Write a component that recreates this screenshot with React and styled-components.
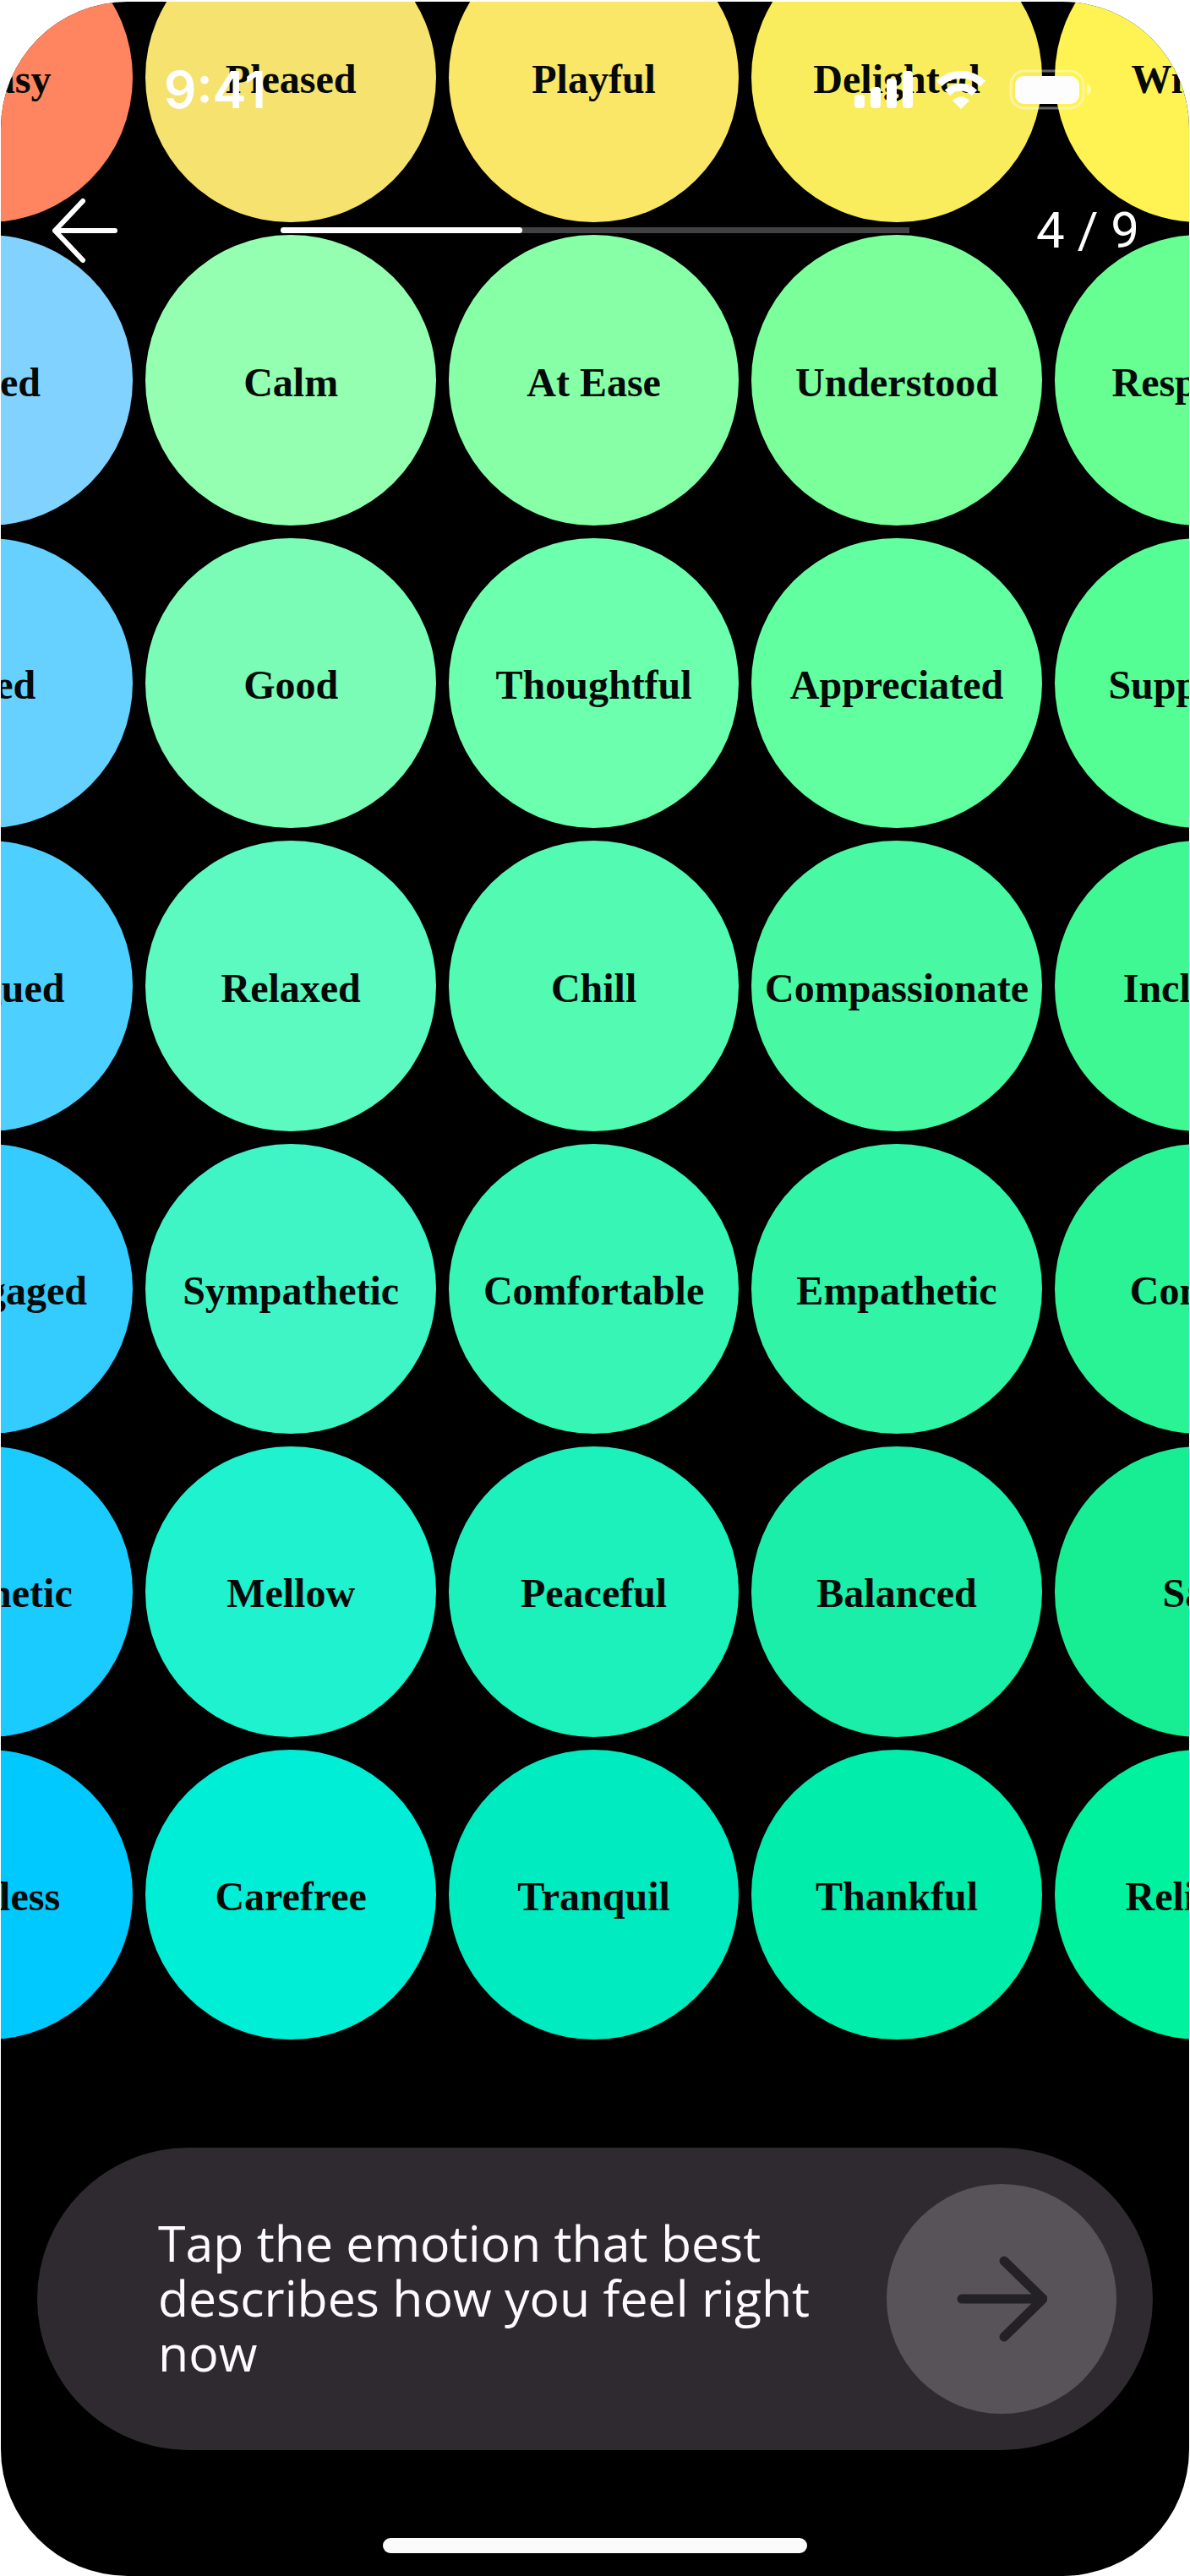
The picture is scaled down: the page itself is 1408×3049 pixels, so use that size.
import React, { useState } from "react";
import styled, { createGlobalStyle } from "styled-components";

const GlobalStyle = createGlobalStyle`
  * { box-sizing: border-box; }
  body { margin: 0; background: #ffffff; }
`;

const serif = `"Liberation Serif", "Times New Roman", serif`;
const sans = `"Open Sans", "Noto Sans", sans-serif`;
const system = `Inter, Roboto, sans-serif`;

const Page = styled.div`
  padding: 2px 1px 0;
`;

const Screen = styled.div`
  position: relative;
  overflow: hidden;
  padding-bottom: 27px;
  border-radius: 150px;
  background: #000000;
`;

const Overlay = styled.header`
  position: absolute;
  z-index: 1;
  inset: 0 0 auto;
  color: #ffffff;
  font-family: ${system};
`;

const StatusBar = styled.div`
  display: flex;
  align-items: center;
  justify-content: space-between;
  height: 208px;
  padding: 0 115px 0 193px;
`;

const Clock = styled.time`
  font-size: 60px;
  font-weight: 600;
  line-height: 70px;
`;

const StatusIcons = styled.div`
  display: flex;
  align-items: center;
  gap: 27px;

  svg { display: block; }
`;

const NavBar = styled.nav`
  display: grid;
  grid-template-columns: 272px 1fr 272px;
  align-items: center;
  height: 125px;
  padding: 0 59px;
`;

const BackButton = styled.button`
  justify-self: start;
  padding: 0;
  border: 0;
  background: none;
  color: inherit;
  cursor: pointer;

  svg { display: block; }
`;

const Track = styled.div`
  height: 7px;
  border-radius: 4px 0 0 4px;
  background: #424144;
`;

const Fill = styled.div`
  width: ${({ $value }) => $value}%;
  height: 100%;
  border-radius: 4px;
  background: #ffffff;
`;

const Step = styled.span`
  justify-self: end;
  font-family: Roboto, Inter, sans-serif;
  font-size: 60px;
  line-height: 70px;
`;

const EmotionGrid = styled.main`
  display: grid;
  grid-template-columns: repeat(5, minmax(0, 1fr));
  gap: 15px;
  margin: -82px -13.1% 0 -13.3%;
`;

const Emotion = styled.button`
  display: flex;
  align-items: center;
  justify-content: center;
  aspect-ratio: 1;
  padding: 4px 0 0;
  border: 0;
  border-radius: 50%;
  background: ${({ $color }) => $color};
  color: #050907;
  font: bold 48px ${serif};
  white-space: nowrap;
  cursor: pointer;
`;

const Prompt = styled.section`
  display: flex;
  align-items: center;
  justify-content: space-between;
  gap: 40px;
  margin: 128px 43px 0;
  padding: 43px 43px 43px 143px;
  border-radius: 179px;
  background: #2e2a2f;
`;

const PromptText = styled.p`
  flex: 1;
  margin: 0;
  padding-bottom: 4px;
  color: #fdfbfd;
  font: 400 59px/65px ${sans};
`;

const NextButton = styled.button`
  display: flex;
  align-items: center;
  justify-content: center;
  flex: none;
  width: 272px;
  height: 272px;
  padding: 0;
  border: 0;
  border-radius: 50%;
  background: #575358;
  color: #242126;
  cursor: pointer;
`;

const HomeIndicator = styled.div`
  width: 502px;
  max-width: 40%;
  height: 18px;
  margin: 104px auto 0;
  border-radius: 9px;
  background: #fcfbfc;
`;

const emotions = [
  ["Uneasy", "#ff8560"], ["Pleased", "#f6e26f"], ["Playful", "#fae667"], ["Delighted", "#faed5d"], ["Wishful", "#fef352"],
  ["Bored", "#81d2ff"], ["Calm", "#94ffb0"], ["At Ease", "#87ffa6"], ["Understood", "#7aff9b"], ["Respected", "#67ff92"],
  ["Tired", "#66d0ff"], ["Good", "#7afcb6"], ["Thoughtful", "#6cffad"], ["Appreciated", "#62ffa0"], ["Supported", "#55fe95"],
  ["Fatigued", "#4dd0ff"], ["Relaxed", "#5cf9c0"], ["Chill", "#52fab2"], ["Compassionate", "#48f8a2"], ["Included", "#40f893"],
  ["Disengaged", "#34ccff"], ["Sympathetic", "#3ff5c6"], ["Comfortable", "#37f5b5"], ["Empathetic", "#31f4a7"], ["Content", "#2af396"],
  ["Apathetic", "#1acbff"], ["Mellow", "#1ef2ce"], ["Peaceful", "#1cf1bb"], ["Balanced", "#1beea8"], ["Safe", "#17ee94"],
  ["Helpless", "#00c9ff"], ["Carefree", "#00eed6"], ["Tranquil", "#00ebbf"], ["Thankful", "#00edac"], ["Relieved", "#00f29f"],
];

function SignalIcon() {
  return (
    <svg width="70" height="46" viewBox="0 0 70 46" fill="currentColor" aria-hidden="true">
      <rect x="1" y="29" width="12" height="16" rx="4" />
      <rect x="20" y="20" width="12" height="25" rx="4" />
      <rect x="39" y="10" width="12" height="35" rx="4" />
      <rect x="58" y="1" width="12" height="44" rx="4" />
    </svg>
  );
}

function WifiIcon() {
  return (
    <svg width="60" height="46" viewBox="0 0 60 46" aria-hidden="true">
      <g fill="none" stroke="currentColor" strokeWidth="9">
        <path d="M4 16C18 2 42 2 56 16" />
        <path d="M14 27C23 18 37 18 46 27" />
      </g>
      <path d="M20 36Q30 27 40 36L30 46Z" fill="currentColor" />
    </svg>
  );
}

function BatteryIcon() {
  return (
    <svg width="98" height="48" viewBox="0 0 98 48" aria-hidden="true">
      <rect x="2" y="2" width="86" height="44" rx="16" fill="none" stroke="#ffffff" strokeOpacity="0.4" strokeWidth="3" />
      <path d="M92 17Q97 19 97 24Q97 29 92 31Z" fill="#ffffff" fillOpacity="0.5" />
      <rect x="7" y="8" width="76" height="33" rx="11" fill="#fefdfd" />
    </svg>
  );
}

function BackIcon() {
  return (
    <svg width="82" height="80" viewBox="0 0 82 80" fill="none" stroke="currentColor" strokeWidth="6" strokeLinecap="round" strokeLinejoin="round" aria-hidden="true">
      <path d="M76 40H5M38 5L5 40L38 75" />
    </svg>
  );
}

function NextIcon() {
  return (
    <svg width="108" height="104" viewBox="0 0 108 104" fill="none" stroke="currentColor" strokeWidth="11" strokeLinecap="round" strokeLinejoin="round" aria-hidden="true">
      <path d="M7 52H103M57 7L103 52L57 97" />
    </svg>
  );
}

export default function App() {
  const [selected, setSelected] = useState(null);

  return (
    <Page>
      <GlobalStyle />
      <Screen>
        <Overlay>
          <StatusBar>
            <Clock>9:41</Clock>
            <StatusIcons>
              <SignalIcon />
              <WifiIcon />
              <BatteryIcon />
            </StatusIcons>
          </StatusBar>
          <NavBar>
            <BackButton type="button" aria-label="Back">
              <BackIcon />
            </BackButton>
            <Track role="progressbar" aria-label="Progress" aria-valuemin={0} aria-valuemax={9} aria-valuenow={4}>
              <Fill $value={38.5} />
            </Track>
            <Step>4 / 9</Step>
          </NavBar>
        </Overlay>
        <EmotionGrid>
          {emotions.map(([name, color]) => (
            <Emotion key={name} type="button" $color={color} aria-pressed={selected === name} onClick={() => setSelected(name)}>
              {name}
            </Emotion>
          ))}
        </EmotionGrid>
        <Prompt>
          <PromptText>Tap the emotion that best describes how you feel right now</PromptText>
          <NextButton type="button" aria-label="Next">
            <NextIcon />
          </NextButton>
        </Prompt>
        <HomeIndicator />
      </Screen>
    </Page>
  );
}
